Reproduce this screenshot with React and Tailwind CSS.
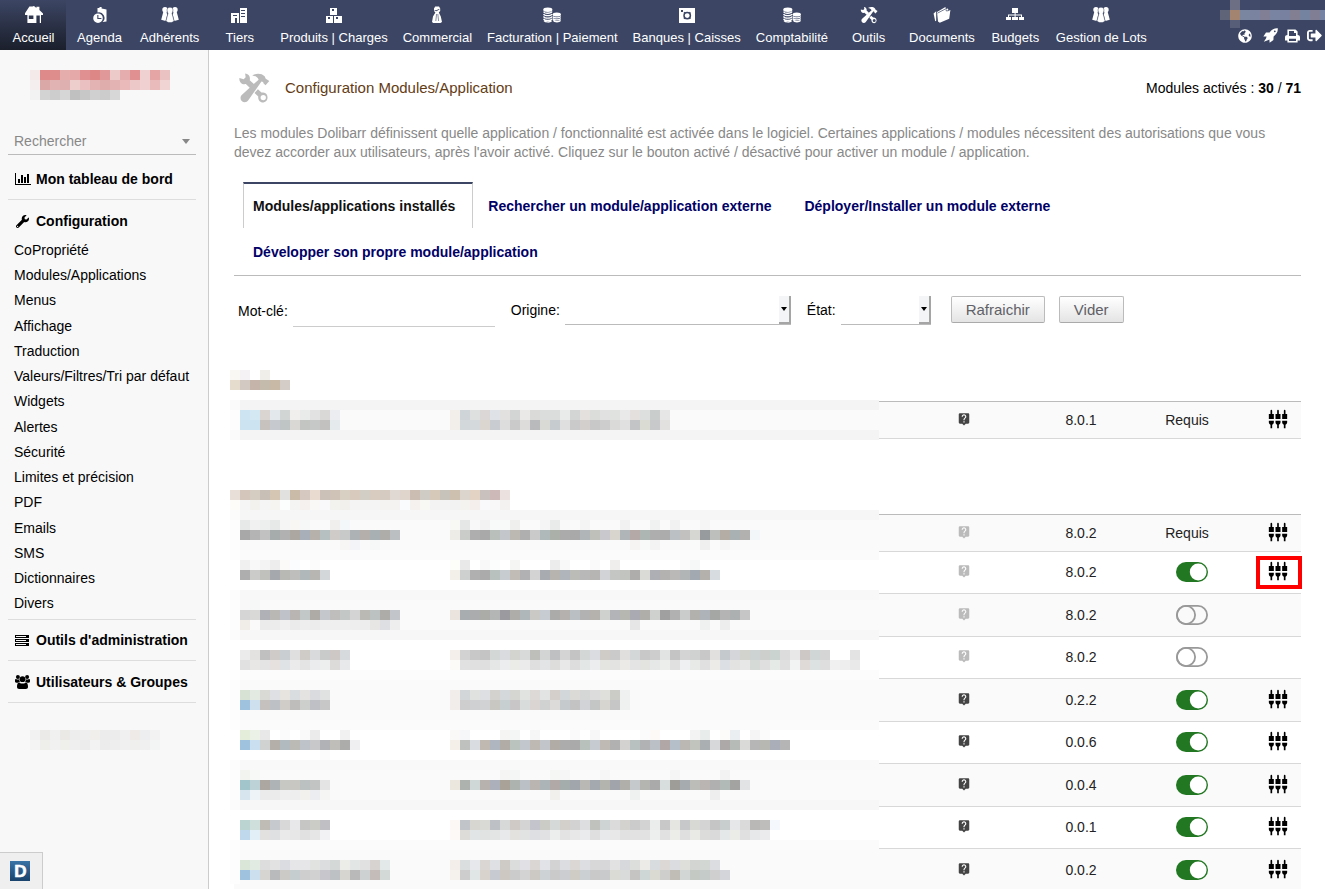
import React from "react";
import { FaGlobeAmericas, FaSignOutAlt, FaWrench } from "react-icons/fa";
import { MdLiveHelp, MdSettingsInputComponent } from "react-icons/md";

/* ---------- censored areas: grids of 10px cells ---------- */

// A token is "." (nothing), two hex digits (a grey) or six hex digits.
function toColor(token) {
  return token.length === 2 ? `#${token}${token}${token}` : `#${token}`;
}

function Mosaic({ width, height, bands = [], patches, className }) {
  return (
    <svg
      aria-hidden="true"
      width={width}
      height={height}
      viewBox={`0 0 ${width} ${height}`}
      shapeRendering="crispEdges"
      className={className}
    >
      {bands.map(([y, h, color]) => (
        <g key={y}>
          <rect x="0" y={y} width={width} height={h} fill={toColor(color)} />
          <rect x="0" y={y} width="10" height={h} fill="#fff" fillOpacity="0.5" />
        </g>
      ))}
      {patches.map(([x, y, cells]) =>
        cells.split(" ").map((token, i) =>
          token === "." ? null : (
            <rect key={`${x}-${y}-${i}`} x={x + i * 10} y={y} width="10" height="10" fill={toColor(token)} />
          )
        )
      )}
    </svg>
  );
}

const logoPatches = [
  [0, 0, "f4eaea de8a8a df8c8c e6adad e5a9a9 e09090 dd8787 e09898 eccaca e5adad e09090 f0d1d1 e5a5a5 ebc2c2"],
  [0, 10, "f5eeee dba8a8 e2b3b3 deb0b0 eecdcd eac0c0 e3b3b3 e0adad e3b3b3 eababa ecc8c8 f0d0d0 eabbbb f0d3d3"],
  [0, 20, "f2 d3 cd d6 c0 c7 d0 cc d7"],
];

const footerPatches = [
  [0, 0, "f2 eceae8 f0 eae9e6 ed ef f0efec ec ec f0 eeeae8 eceef0 f2"],
  [0, 10, "f4 eeeeea f1 efefec ef ec f2 ec ee f0 efefee f0 f3f5f5"],
];

const userPatches = [
  [10, 0, "6d7084 40496a 424b6a 3e4766 414a67 3f4866"],
  [0, 10, "5f6479 a28471 7a85a0 7a84a0 807f95 7884a2 7882a0 827f93 7484a0 807e94 7783a2"],
  [10, 20, "565e78"],
];

const coreBands = [
  [30, 10, "f4"],
  [40, 20, "fa"],
  [60, 10, "f4"],
];

const corePatches = [
  [0, 0, "faf8f3 f4f2f4 . efeee9"],
  [0, 10, "e5dccd d2c9c3 c4b4a9 c4bbac c8b8a6 d4ccc7"],
  [10, 40, "cde4f2 d4e8f4 dbd5d1 e3e8ec d1d5d3 f0efed e8ebea e2e2e2 d9d8d7 ebedf0"],
  [10, 50, "cce4f2 cce4f2 c8c2bf c6cacf bfc4c5 d9d8d4 c3c5c2 c5c8c7 c3c1c0 e5eaec"],
  [220, 40, "f2eeea cfd4d8 dde0df dbd7d7 dfe2e6 e3e1e0 d2d5d4 ebe9e8 dadbd9 dadddb dadddb e8ebea d3d5d4 e3e0de dbdddb e0e1e0 dfe2de e9 e3e0de dddfde c9cdcc e6"],
  [220, 50, "f2eeea d3d8db d4dadc dcd6d1 c9ccd1 dd ca dedcda b9babc d9d9d6 c5cbce df ca d2cfcc c8 cd dadbd8 e0 c2c4c6 dadbd3 c8c9ca e2e1e0"],
];

const moduleBands = [
  [20, 10, "f6"],
  [30, 30, "fa"],
  [60, 10, "fb"],
  [70, 30, "ff"],
  [100, 10, "f8"],
  [110, 30, "fa"],
  [140, 10, "f7"],
  [150, 30, "ff"],
  [180, 10, "fc"],
  [190, 40, "fa"],
  [230, 10, "fb"],
  [240, 30, "ff"],
  [270, 10, "f9"],
  [280, 30, "fa"],
  [310, 10, "f7"],
  [320, 30, "ff"],
  [350, 10, "fb"],
  [360, 34, "fa"],
];

const modulePatches = [
  [0, 0, "e7dfd8 d4c6bb d6cdc2 c8c0b6 d5c5b3 e1e2e0 c9bba8 d4c8c1 e9dbcf cbc1b9 cfc3b8 d9d0c4 d8cabc d2cdc5 d8cbbf d5cbc0 e0d8d2 e0d5cc ccbdb2 cfcbc5 d7c9b9 c7c3bb cec0ae dcd5ce e2d3c5 c9c1bd ccb9b8 ebe2df"],
  [0, 10, "fdfcf9 f5 f3f1ee f5 f5f4f1 fcfdfd f4f4f3 f4f1ee f9f8f6 f9f9fb f2f2ee f2f0ed f4 f4 f4 f4f3f1 f4f3f1 fafbfc f4f1ee f8f8f5 f3 f3 f2 f4f3f0 f4efec f9f9fb f8 f3f2f1"],
  [10, 30, "e7e8e8 f1 edeeee e7e9e8 f5 f8f7f4 f5f8f7 . . f1efed f4f7fa"],
  [10, 40, "a8 b4 c1 a6acab b0b1b0 aca7a1 a9afb8 b6b1ab b6c0c1 cfcbc8 c8caca adb3b4 b4afab a9b0b4 afadaa bbbfc2"],
  [110, 50, "f8f6f4 f2f4f7 . f6f8f7"],
  [220, 30, "f8f8f5 e5e6e6 f8 f2 f8faf9 f8faf9 eff0ee . . f5 e8ebea f9 . f4 . . . f1 . . eff2f0 . f1 . . f5"],
  [220, 40, "edece7 caccca ae a9 b9c0bc c3c7cb bcb9b2 aeafae ca b0b9ba abb0a9 ab a9 b0b6b8 c0c0ba c9c9cd d8d5cf b0b5b8 b5a9a8 aeb6b4 afaeaf ac bbc0c4 c2c1bf d6d7d3 989b9e bdbfbd b3ada6 a9b1b2 b2b1af f3f6f9"],
  [400, 50, "f5f4f3 f8faf9 f3 . . . . ef . f5"],
  [10, 70, "f0 f8 f4 ed fbfaf8 fbfcfd . fb"],
  [10, 80, "ae cbccca c0c0bd a5a9ad b8b8b5 bebfbc b0b8b9 b7b6b3 d3d7da"],
  [220, 70, "fdfdfa e9 . f8 fbfdfc . f5f6f4 . . . ec f8 . . fa . efeeec . . . . . . fa f5f8f6"],
  [220, 80, "f2f0e9 cdd0cf b0 ab b8c1bd c7ccd0 c1bdb6 b1b0b2 d3 a8abb0 b7b4af b0b5bb bbbbb8 b8 b7b5b3 d2d3d6 c4c6c3 c2c4c0 afadab dadbd6 adafb5 b4b2b1 bab9b7 b2b5b5 a3a9b0 b4b1ac d7dce1"],
  [10, 110, "f8 f6f8f7"],
  [10, 120, "d5 d9d9d7 b0b1b6 b9b8b4 bfc2c8 b9b5b3 c2c8c8 aeaba6 c4c7cc c0bebc c3c7c6 d4 bab9b4 bcc1c1 aeaca9 c2c6ca"],
  [10, 130, "f0ede8 . eb ec f0 eb ee ec ef ef ef ee ed e8e6e4 dedfe2 ee"],
  [220, 120, "ebe4de a8adb0 aaacad ababa8 b3b6b4 9b9b9f aeada9 b0b7bb cbc9c5 c7ccd2 abaca9 b4b1ae b9bfc2 b2 b5b1ac cfd1ce b2b4b7 b7b7b2 aaabb2 b0aea9 ced1ce a0 b1 c9ccca b2b1ae adb3b9 a5a7a4 b4 acb0b1 c6"],
  [400, 130, "e6 . . . . . . eef1ef . ed"],
  [10, 160, "ebebec e3e2e1 c0 cfcbc8 c9ced2 dfdfe0 cfcbc7 d9dadc c9cbca cdc7c5 d6dadc"],
  [10, 170, "e1 e8e7e6 e3e4e3 e6e1df dfe3e6 eb e4 ebecee edefee dcdbd9 e8e9ea"],
  [220, 160, "f4efea d1d2d1 c8 c4 d3d8d7 d9dbdf d3d3cf d8d9d9 bebfba d3d5d5 bfc0c1 d4 c4 d3d7d6 dadce2 cfcbc6 ca e0dfdd d3d7d8 c8 cd e1e4e2 c4 d4 d0d1d1 c8 e1e0de c3c9cd d5d6d9 d3d3ce cdd2d2 cdcfcd cbd3d0 dc e8 cdc8c5 d0d5d5 d5 . . e3"],
  [220, 170, "fdfbf8 e1 e0 df e5e7e6 ebedef ebebe8 eb df e3e4e6 dddedb e8 dd e3e7e5 ebedef e4e4e1 e3e3e1 ebeae6 e4 e3e3df e6e8e7 eceeec e0 eff0f2 e7eae7 e0 edebe8 dce0e4 e3e4e1 e7 d6dad6 df e6eae7 df f2f4f3 dfdad8 dce2e1 de f0 ee e9"],
  [10, 200, "d8e2d4 e3eae2 d9d9d6 dfe0e4 e7e3df d9dde0 e4e3e1 d9dbde e0e2e1"],
  [10, 210, "9fc3df cedfee c5c1bf bdc1c5 d0ccc7 bfbdbb cccfcc bfc0c6 c8c7c8"],
  [220, 200, "f1edea d2d6d9 dfe2df dddfe3 d3d2ce d5d8da d5d5d2 e0e3e0 dcd9d6 e1e4e2 d4cfcb d2d7d9 dcdad6 d4d7d5 dc dfdfdc ccccc7 eff1f1"],
  [220, 210, "f1edea ce ced0d2 d0d2d4 c8c7c2 c7cfd1 c8c6c7 d8dddb dad5d2 d0d2d1 dcdbd9 c5cbcd c3 d2d3d7 c3c6c5 d7d5d0 c6 eff1f1"],
  [10, 240, "e4ecda ebf1e7 e8 . fb . f9 eb . . f1"],
  [10, 250, "9fc3df cadff0 d0d2d1 b4afa9 b1bbbf bbbab4 bec3ca c8c8ca b0b2b5 c0beb8 acadab efeff1"],
  [220, 240, "fbf9f7 f5f7f9 . . . f5f6f4 f4f6f5 . f6 . . . fa . f7 . . . . fb fdf9f7 . . . f3 e8ecea . fdfbf9 eaeef0 . f5 fb"],
  [220, 250, "f5efea bfc1bf d9dde2 bfb9b1 b0b6c0 b2aca6 bbc3be c1c7cd bebab3 c2c6cb b1aca5 ac aa b8c1bb c6cbd1 bfbab3 b1 d3d2d0 b9c0c0 b0b2b4 bac0c5 b1a7a6 b5bfca bbb8b4 c1c4bd aab0b2 d7d8d9 ada9a9 b6bbb8 dadad8 b6 b8b8b2 aaaeb8 b6b5b6"],
  [10, 260, ". . . . . . . . fb"],
  [10, 280, "f2f4f0 f7f9f6"],
  [10, 290, "a2c5cc bdd2d6 ada7a2 aeb3b6 c7c8c3 c8c7c1 bbc0c0 c1c4c3 e4"],
  [10, 300, "d7e6ee eef3f7 eb eb ef ee f2f1ed ecedf0 f5f5f3"],
  [220, 280, ". . . . . f5f6f3 f3f6f4 . . . f5f7f5 f6 . . . f6 . . . . . . f5 . . . . f2"],
  [220, 290, "ebe7df adb2af d0d7d7 b7b2ae abb0bb a9a299 adb4af bac0c5 bab5b0 acb4b8 b0a9a7 a5adac a1a5ac bab8b4 a4a9af b3b4ae a1a4aa b0afa9 c6c9cb b4b4b1 a9aaa9 d8dedd 9f9d97 a6abb0 bcbcb8 bab5b2 b0 b2bab7 a3a3a1 e2e3e5"],
  [320, 300, "f2f0ed . . . . . . . eff1f0 . . . . . . . ee"],
  [10, 330, "bbd4d1 cfdfdc bfbcb6 c6cace d8d8d9 e8e8ea c6c6c5 ccccc7 c0bfc4"],
  [10, 340, "bfd8ec e2eff6 e2e1e0 dfe0e2 ea e7 e1 e6 f2f2f5"],
  [220, 330, "fcf8f5 c1c5c9 d7d6d1 d9dad6 bdc1c6 d7d9d8 cfcac5 d4d4d4 c4c5cc cbccc6 d5d9d8 d3cfca d2 dddee0 bfc2bd ced3d3 db d4d2cf cb d3 ebedec c8 e5e5e2 c7c8ca d8d9d4 d4 c5 c8cecd e5e7e9 da b9b8b7 bebdbc f5f9fd"],
  [220, 340, "fcf9f7 dedcd8 e1e5e5 e1e3e3 e2e5e4 e8e9ea e4e2df e0e3e1 dddfe2 e1e1e4 eceeed e3 e8 e9ebed df e8e9eb e8 e1 e2 e2 edefee e1 ecece8 df e9e9e5 dcdcda da e4e8e9 ebebe8 e0 e7e8ea ebebed"],
  [10, 370, "dae6d7 e1ebe2 dd e2 dbdce1 e6e6e9 e6e6e9 e0e3e0 dcdddf d4d8d6 ecece8 e2e7e6 e1 d6d3d1 e3e8e8"],
  [10, 380, "9fc3df cbdfee d6d5d1 b9babc cbcac7 c5cdcf ce d1 c6c6cc bdc1c3 d7d5cf b9 cdd1d1 c3bcb9 d2d9d7"],
  [220, 370, "f3eeea dbdedf e6e8eb dad6d3 dee0e4 cecac5 dadddb e1e1e5 d9d6d3 e1e3e8 d3 dbdde1 dad7d4 dcdee1 d8 d7d7d9 e2 d6d8dc dcdedc ecebe8 d9dcdf dcd8d6 dadce0 dedfdb d3d5d2 d3d7d4 dbdde0"],
  [220, 380, "f5f2ee cd e0e6e6 d8d3cd c8cad1 cdc9c2 cbcbcb d3 ccc9c4 cdd3d5 cacaca cccdd0 cfccc6 cbd1d2 c9 c8cacb dadbd5 d8dbda c6c4c2 cfd6d6 dbdad2 cecfcd c0bcb6 d2d6d4 c5c9c4 c5cbc8 cf d3d5da"],
];

/* ---------- icons ---------- */

function Glyph({ children, size = 18 }) {
  return (
    <svg aria-hidden="true" width={size} height={size} viewBox="0 0 18 18" fill="currentColor">
      {children}
    </svg>
  );
}

const HomeIcon = () => (
  <Glyph>
    <path fillRule="evenodd" d="M4.4 0.6 H7.4 L9 0 L11.4 2 V0.8 H14.4 V4 L18 7.6 V9 H16 V17 H14.8 V9.6 H11.4 V17 H2.4 V9 H0 V7.2 Z M3.8 9.4 V13 H8.4 V9.4 Z" />
  </Glyph>
);

const AgendaIcon = () => (
  <Glyph>
    <path d="M6.5 3.2 V2 H8 L9 1 H10.6 V2.4 L15.5 3.4 V15.5 L11.6 16 A5.6 5.6 0 0 0 6.5 6.4 Z" />
    <path fillRule="evenodd" d="M7 7.4 A4.8 4.8 0 1 1 7 17 A4.8 4.8 0 0 1 7 7.4 Z M6.3 9 V13 H10.4 V11.9 H7.4 V9 Z" />
  </Glyph>
);

const PeopleIcon = () => (
  <Glyph>
    <circle cx="4" cy="3.8" r="2.7" />
    <circle cx="14" cy="3.8" r="2.7" />
    <path d="M2.4 5.6 H5.4 L6.2 9 L4.6 15 L0.2 13.8 Z M15.6 5.6 H12.6 L11.8 9 L13.4 15 L17.8 13.8 Z" />
    <path d="M9 1.2 C11 1.2 12.2 2.8 11.9 4.8 C11.8 6 11.4 6.6 11 7.2 L13 14.8 C12.4 16 11 16.6 9 16.6 C7 16.6 5.6 16 5 14.8 L7 7.2 C6.6 6.6 6.2 6 6.1 4.8 C5.8 2.8 7 1.2 9 1.2 Z" stroke="#3c4664" strokeWidth="0.5" />
  </Glyph>
);

const BuildingIcon = () => (
  <Glyph>
    <path fillRule="evenodd" d="M9 2 H16 V17 H9 Z M10 4 V5 H14 V4 Z M10 7 V8 H14 V7 Z M10 10 V11 H14 V10 Z" />
    <path fillRule="evenodd" d="M0 7 H8 V17 H6 V12 H4 V17 H0 Z M2 9 V10 H6 V9 Z" />
  </Glyph>
);

const BoxesIcon = () => (
  <Glyph>
    <path fillRule="evenodd" d="M5 2 H12 V9 H5 Z M7 3 V5 H9 V3 Z" />
    <path fillRule="evenodd" d="M1 10 H8 V17 H1 Z M3 11 V13 H5 V11 Z" />
    <path fillRule="evenodd" d="M9 10 H17 V17 H9 Z M11 11 V13 H13 V11 Z" />
  </Glyph>
);

const TieIcon = () => (
  <Glyph>
    <path fillRule="evenodd" d="M7.2 0.4 H11 L12.2 2.4 V5 L10.8 6.6 L12.8 10.6 L14 16 L12.4 17 H5.2 L4 16 L5 10.6 L7.4 6.6 L6 5 V2.4 Z M6.4 4.6 L8.4 5.2 L11.4 3.4 L11.4 2.8 L8.4 4.2 L6.4 4 Z" />
    <path d="M8.6 8 L7.8 15 M9.8 8 L10.6 15" fill="none" stroke="#3c4664" strokeWidth="0.6" />
  </Glyph>
);

const CoinsIcon = () => (
  <Glyph>
    <ellipse cx="4.8" cy="3.8" rx="4.6" ry="2.2" />
    <ellipse cx="13.8" cy="8.6" rx="4.2" ry="2" />
    <g fill="none" stroke="currentColor" strokeWidth="1.3">
      <path d="M0.6 5.6 C1.4 7.8 8 7.8 9 5.6 M0.6 8 C1.4 10.2 8 10.2 9 8 M0.6 10.4 C1.4 12.6 8 12.6 9 10.4 M0.6 12.8 C1.4 15 8 15 9 12.8 M1 14.6 C2.4 16.4 7 16.4 8.6 14.8" />
      <path d="M9.8 10.4 C10.6 12.4 17 12.4 17.8 10.4 M9.8 12.4 C10.6 14.4 17 14.4 17.8 12.4 M10.2 14.4 C11.6 16.2 16.4 16.2 17.6 14.4" />
    </g>
  </Glyph>
);

const SafeIcon = () => (
  <Glyph>
    <path d="M1 2 H17 V17 H1 Z" />
    <path fill="#3c4664" d="M3 4 H5 V6 H3 Z" />
    <circle cx="9.2" cy="9.6" r="3.2" fill="none" stroke="#3c4664" strokeWidth="1.5" />
    <path fill="none" stroke="#3c4664" strokeWidth="1.6" d="M6 6.4 L7.2 7.6 M12.4 6.4 L11.2 7.6 M6 12.8 L7.2 11.6 M12.4 12.8 L11.2 11.6" />
  </Glyph>
);

const ToolsIcon = ({ size }) => (
  <Glyph size={size}>
    <path
      fillRule="evenodd"
      d="M4 0.9 L4.3 3 L3.2 4.1 L0.8 3.4 C0.5 5.6 2.2 7.3 4.4 6.8 L6.9 9.1 L9.1 6.9 L6.6 4.6 C7.1 2.6 5.8 1 4 0.9 Z M11.2 9.7 L9.3 11.8 L11.4 13.8 C11.1 15.7 12.5 17.2 14.3 17.2 A2.9 2.9 0 0 0 14.2 11.5 L13.2 11.6 Z M14.2 12.9 A1.5 1.5 0 1 1 14.2 15.9 A1.5 1.5 0 0 1 14.2 12.9 Z"
    />
    <path d="M8 1.9 C10.4 0.6 13.2 0.7 15 2.4 L15.6 3.8 L16.3 4.2 L17.6 5.1 L15.5 7.4 L14.4 6.5 L14.1 5.6 L13.2 5.4 L5.8 15.9 C5 17.2 3.1 17.3 2.1 16.3 C1.1 15.3 1.2 13.5 2.4 12.6 L11.6 4.3 C11.1 2.9 9.8 2.2 8 1.9 Z" />
  </Glyph>
);

const FolderIcon = () => (
  <Glyph>
    <path d="M0.6 7.6 L3.2 5.2 V14.8 L2.2 15.2 Z" />
    <path d="M4 6 L12.4 1 L13 3 L15 2.4 L15.4 4.6 L17.4 4 L16.2 12.8 L6.8 16.8 L5 15.6 Z" />
    <path d="M4.4 7.2 L12 3.2 M12.6 2.4 L13.4 5 L16.4 4.4" fill="none" stroke="#3c4664" strokeWidth="0.7" />
  </Glyph>
);

const SitemapIcon = () => (
  <Glyph>
    <path d="M6 2 H12 V7 H9.6 V8.6 H16 V11 H18 V14 H13 V11 H15 V9.6 H9.6 V11 H12 V14 H6 V11 H8.6 V9.6 H3 V11 H5 V14 H0 V11 H2 V8.6 H8.6 V7 H6 Z" />
  </Glyph>
);

const RocketIcon = () => (
  <svg aria-hidden="true" width="15" height="15" viewBox="0 0 15 15" fill="currentColor">
    <path
      fillRule="evenodd"
      d="M14.8 0.3 C11.4 0 8.8 1.4 6.6 4.4 L3 4.6 L0.4 8.4 L3.6 8.6 L3 10.4 L0.8 13.8 L4.8 12.2 L6.4 11.6 L6.6 14.8 L10.4 12 L10.6 8.4 C13.6 6.2 15 3.6 14.8 0.3 Z M11.8 2.4 A0.9 0.9 0 1 1 11.8 4.2 A0.9 0.9 0 0 1 11.8 2.4 Z"
    />
  </svg>
);

const PrintIcon = () => (
  <svg aria-hidden="true" width="15" height="14" viewBox="0 0 15 14" fill="currentColor">
    <path fillRule="evenodd" d="M2.4 0.5 H10.5 L12.6 2.6 V6 C13.9 6 15 6.8 15 8.2 V11.6 H12.6 V13.5 H2.4 V11.6 H0 V8.2 C0 6.8 1.1 6 2.4 6 Z M4 2 V7 H11 V4 H9 V2 Z M4 9.8 V12 H11 V9.8 Z" />
  </svg>
);

const ChartIcon = () => (
  <svg aria-hidden="true" width="16" height="12" viewBox="0 0 16 12" shapeRendering="crispEdges">
    <path d="M0 0 H1 V11 H16 V12 H0 Z M3 6 H5 V10 H3 Z M6 2 H8 V10 H6 Z M9 4 H11 V10 H9 Z M12 1 H14 V10 H12 Z" />
  </svg>
);

const ServerIcon = () => (
  <svg aria-hidden="true" width="14" height="11" viewBox="0 0 14 11" shapeRendering="crispEdges">
    <path
      fillRule="evenodd"
      d="M0 0 H14 V3 H0 Z M1 1 V2 H11 V1 Z M0 4 H14 V7 H0 Z M1 5 V6 H11 V5 Z M0 8 H14 V11 H0 Z M1 9 V10 H11 V9 Z"
    />
  </svg>
);

const GroupIcon = () => (
  <svg aria-hidden="true" width="15" height="14" viewBox="0 0 15 14">
    <circle cx="2.9" cy="2" r="2" />
    <circle cx="12.1" cy="2" r="2" />
    <path d="M0 5 C0 4 0.8 3.6 1.4 4.2 C2.4 4.8 3.4 4.6 4.2 4.2 C4.2 5.4 4.4 6.2 5 7 C4 7 3.4 7.2 2.8 7.8 H1.4 C0.6 7.8 0 7.4 0 6.6 Z M15 5 C15 4 14.2 3.6 13.6 4.2 C12.6 4.8 11.6 4.6 10.8 4.2 C10.8 5.4 10.6 6.2 10 7 C11 7 11.6 7.2 12.2 7.8 H13.6 C14.4 7.8 15 7.4 15 6.6 Z" />
    <circle cx="7.5" cy="4.2" r="2.9" />
    <path d="M4.2 7.4 C6.4 9 8.6 9 10.8 7.4 C12.4 7.4 13 9.4 13 11.8 C13 13.2 12.2 14 10.8 14 H4.2 C2.8 14 2 13.2 2 11.8 C2 9.4 2.6 7.4 4.2 7.4 Z" />
  </svg>
);

/* ---------- top bar ---------- */

const topMenu = [
  ["Accueil", HomeIcon],
  ["Agenda", AgendaIcon],
  ["Adhérents", PeopleIcon],
  ["Tiers", BuildingIcon],
  ["Produits | Charges", BoxesIcon],
  ["Commercial", TieIcon],
  ["Facturation | Paiement", CoinsIcon],
  ["Banques | Caisses", SafeIcon],
  ["Comptabilité", CoinsIcon],
  ["Outils", ToolsIcon],
  ["Documents", FolderIcon],
  ["Budgets", SitemapIcon],
  ["Gestion de Lots", PeopleIcon],
];

function TopBar() {
  return (
    <header className="flex h-[50px] shrink-0 justify-between bg-[#3c4664] text-white">
      <nav className="flex text-[13px] leading-4">
        {topMenu.map(([label, Icon], i) => (
          <a
            key={label}
            href="#"
            className={`flex min-w-[66px] shrink-0 flex-col items-center gap-1.5 whitespace-nowrap pl-2 pr-[7px] pt-1.5 ${
              i === 0 ? "bg-linear-to-b from-[#3c4664] to-[#1b1f2c]" : ""
            }`}
          >
            <Icon />
            {label}
          </a>
        ))}
      </nav>
      <div className="flex flex-col items-end">
        <Mosaic width={105} height={28} patches={userPatches} />
        <div className="flex items-center gap-[7px] pr-[3px]">
          <a href="#" aria-label="Langue" className="pr-1"><FaGlobeAmericas size={14} /></a>
          <a href="#" aria-label="Raccourcis"><RocketIcon /></a>
          <a href="#" aria-label="Imprimer"><PrintIcon /></a>
          <a href="#" aria-label="Déconnexion"><FaSignOutAlt size={15} /></a>
        </div>
      </div>
    </header>
  );
}

/* ---------- side bar ---------- */

const configItems = [
  "CoPropriété", "Modules/Applications", "Menus", "Affichage", "Traduction",
  "Valeurs/Filtres/Tri par défaut", "Widgets", "Alertes", "Sécurité",
  "Limites et précision", "PDF", "Emails", "SMS", "Dictionnaires", "Divers",
];

function SideTitle({ icon, children }) {
  return (
    <a href="#" className="flex h-5 items-center whitespace-nowrap font-bold">
      <span className="flex w-[22px] items-center pl-px">{icon}</span>
      {children}
    </a>
  );
}

function SideBar() {
  return (
    <aside className="flex w-[209px] shrink-0 flex-col border-r border-[#ccc] bg-[#f8f8f8] pl-2 pr-3 text-[14px] text-black">
      <Mosaic width={140} height={30} patches={logoPatches} className="ml-[22px] mt-5" />
      <button
        type="button"
        className="mt-7 flex h-[27px] shrink-0 items-center justify-between border-b border-[#bbb] px-1.5 text-[#888]"
      >
        Rechercher
        <svg aria-hidden="true" width="8" height="5" viewBox="0 0 8 5" fill="#888"><path d="M0 0 H8 L4 5 Z" /></svg>
      </button>
      <div className="border-b border-[#ddd] px-1.5 pb-[10px] pt-[14px]">
        <SideTitle icon={<ChartIcon />}>Mon tableau de bord</SideTitle>
      </div>
      <div className="border-b border-[#ddd] px-1.5 pb-[3px] pt-[11px]">
        <SideTitle icon={<FaWrench size={13} className="ml-px" />}>Configuration</SideTitle>
        <ul className="pt-[7px] leading-[25px]">
          {configItems.map((label) => (
            <li key={label} className="whitespace-nowrap [&:nth-child(4n)]:pt-px"><a href="#">{label}</a></li>
          ))}
        </ul>
      </div>
      <div className="border-b border-[#ddd] px-1.5 py-[10px]">
        <SideTitle icon={<ServerIcon />}>Outils d'administration</SideTitle>
      </div>
      <div className="border-b border-[#ddd] px-1.5 pb-[10px] pt-[11px]">
        <SideTitle icon={<GroupIcon />}>Utilisateurs &amp; Groupes</SideTitle>
      </div>
      <Mosaic width={130} height={20} patches={footerPatches} className="ml-[22px] mt-[27px]" />
      <button
        type="button"
        aria-label="Dolibarr"
        className="-ml-2 mt-auto flex h-[37px] w-[43px] items-center justify-center border-r border-t border-[#ccc] bg-[#efefef] pr-[3px]"
      >
        <svg aria-hidden="true" width="20" height="20" viewBox="0 0 20 20">
          <defs>
            <linearGradient id="badge" x1="0" y1="0" x2="0" y2="1">
              <stop offset="0" stopColor="#3a73a6" />
              <stop offset="1" stopColor="#1a426c" />
            </linearGradient>
          </defs>
          <rect width="20" height="20" fill="url(#badge)" />
          <text x="10.5" y="16" textAnchor="middle" fontFamily="Liberation Sans, sans-serif" fontWeight="bold" fontSize="17" fill="#fff" stroke="#fff" strokeWidth="0.6">D</text>
        </svg>
      </button>
    </aside>
  );
}

/* ---------- main area ---------- */

const tabs = [
  "Modules/applications installés",
  "Rechercher un module/application externe",
  "Déployer/Installer un module externe",
  "Développer son propre module/application",
];

function DropDown({ id, label, width }) {
  return (
    <div className="flex items-center gap-[5px]">
      <label htmlFor={id}>{label}</label>
      <span className={`relative flex h-[29px] ${width}`}>
        <select id={id} className="w-full appearance-none border-b border-[#bbb] bg-transparent outline-none" />
        <span className="pointer-events-none absolute right-0 top-0 flex h-[28px] w-3 items-center justify-center border-b-2 border-r-2 border-[#a5a5a5] bg-[#f4f5f6]">
          <svg aria-hidden="true" width="6" height="4" viewBox="0 0 6 4"><path d="M0 0 H6 L3 4 Z" /></svg>
        </span>
      </span>
    </div>
  );
}

const pushButton =
  "h-[27px] rounded-[2px] border border-[#bbb] border-b-[#aaa] bg-linear-to-b from-white to-[#e4e4e4] px-3.5 text-[15px] leading-6 text-[#606066]";

function Filters() {
  return (
    <form className="mt-5 flex items-start text-[14px] text-black" onSubmit={(e) => e.preventDefault()}>
      <div className="flex h-[31px] items-center gap-[5px] pl-1">
        <label htmlFor="keyword">Mot-clé:</label>
        <input id="keyword" type="text" className="h-[31px] w-[202px] border-b border-[#ccc] bg-transparent outline-none" />
      </div>
      <div className="ml-4"><DropDown id="origin" label="Origine:" width="w-[226px]" /></div>
      <div className="ml-4"><DropDown id="state" label="État:" width="w-[90px]" /></div>
      <button type="submit" className={`ml-5 ${pushButton}`}>Rafraichir</button>
      <button type="reset" className={`ml-3.5 ${pushButton}`}>Vider</button>
    </form>
  );
}

function Toggle({ on }) {
  return (
    <button type="button" role="switch" aria-checked={on} aria-label="Activer le module" className="ml-2.5 block">
      <svg aria-hidden="true" width="32" height="20" viewBox="0 0 32 20">
        {on ? (
          <>
            <rect width="32" height="20" rx="10" fill="#227722" />
            <circle cx="22.2" cy="10" r="8.4" fill="#fff" />
          </>
        ) : (
          <g fill="none" stroke="#999" strokeWidth="1.8">
            <rect x="0.9" y="0.9" width="30.2" height="18.2" rx="9.1" />
            <circle cx="10" cy="10" r="9.1" />
          </g>
        )}
      </svg>
    </button>
  );
}

function ModuleTable({ rows, edge }) {
  return (
    <table className={`w-full table-fixed border-collapse border-t border-[#bbb] text-[14px] text-[#222] ${edge}`}>
      <colgroup>
        <col className="w-[216px]" />
        <col />
        <col className="w-[158px]" />
        <col className="w-[76px]" />
        <col className="w-[136px]" />
        <col className="w-[46px]" />
      </colgroup>
      <tbody>
        {rows.map(({ version, state, faded, setup, marked }, i) => (
          <tr
            key={i}
            className={`border-b border-[#d8d8d8] ${i % 2 === 0 ? "bg-[#fafafa]" : "bg-white"} ${
              state === "required" ? "h-[37px]" : i % 2 === 0 ? "h-[43px]" : "h-[42px]"
            }`}
          >
            <td />
            <td />
            <td className="p-0 pb-[3px]">
              <MdLiveHelp size={14} className={`mx-auto ${faded ? "text-[#bbb]" : "text-[#444]"}`} />
            </td>
            <td className="p-0 text-center">{version}</td>
            <td className="p-0">
              {state === "required" ? (
                <span className="block text-center">Requis</span>
              ) : (
                <span className="flex justify-center pb-px"><Toggle on={state === "on"} /></span>
              )}
            </td>
            <td className="relative p-0 pb-[3px]">
              {setup && (
                <a href="#" aria-label="Configurer" className="flex justify-center text-black">
                  <MdSettingsInputComponent size={20} />
                </a>
              )}
              {marked && (
                <span className="pointer-events-none absolute -right-px left-px top-1 h-[33px] border-4 border-[#f00]" />
              )}
            </td>
          </tr>
        ))}
      </tbody>
    </table>
  );
}

const coreRows = [{ version: "8.0.1", state: "required", setup: true }];

const moduleRows = [
  { version: "8.0.2", state: "required", faded: true, setup: true },
  { version: "8.0.2", state: "on", faded: true, setup: true, marked: true },
  { version: "8.0.2", state: "off", faded: true },
  { version: "8.0.2", state: "off", faded: true },
  { version: "0.2.2", state: "on", setup: true },
  { version: "0.0.6", state: "on", setup: true },
  { version: "0.0.4", state: "on", setup: true },
  { version: "0.0.1", state: "on", setup: true },
  { version: "0.0.2", state: "on", setup: true },
];

export default function App() {
  return (
    <div className="flex h-screen flex-col overflow-hidden bg-white font-['Liberation_Sans',Arial,sans-serif]">
      <TopBar />
      <div className="flex min-h-0 grow">
        <SideBar />
        <main className="min-w-0 grow overflow-y-auto pl-[25px] pr-6 [scrollbar-width:none]">
          <div className="mt-[22px] flex items-center text-[15px] leading-8">
            <span className="ml-1 text-[#bbb]"><ToolsIcon size={32} /></span>
            <h1 className="ml-[15px] grow text-[#643c14]">Configuration Modules/Application</h1>
            <p className="text-[14px] text-black">Modules activés : <b>30</b> / <b>71</b></p>
          </div>
          <p className="mt-5 text-[14px] leading-[19px] text-[#888]">
            Les modules Dolibarr définissent quelle application / fonctionnalité est activée dans le logiciel. Certaines
            applications / modules nécessitent des autorisations que vous devez accorder aux utilisateurs, après l'avoir
            activé. Cliquez sur le bouton activé / désactivé pour activer un module / application.
          </p>
          <nav className="mt-5 flex flex-wrap gap-x-[5px] border-b border-[#bbb] pb-px pl-[9px] text-[14px] font-bold">
            {tabs.map((label, i) => (
              <a
                key={label}
                href="#"
                className={`flex h-[46px] items-center whitespace-nowrap border-x border-t-2 pl-[9px] pr-[17px] ${
                  i === 0 ? "border-x-[#ccc] border-t-[#3c4664] text-[#111]" : "border-transparent text-[#000066]"
                }`}
              >
                {label}
              </a>
            ))}
          </nav>
          <Filters />
          <section className="relative mt-[43px] pt-[31px]">
            <ModuleTable rows={coreRows} edge="border-b" />
            <Mosaic width={649} height={70} bands={coreBands} patches={corePatches} className="absolute -left-1 top-0" />
          </section>
          <section className="relative mt-[51px] pt-6">
            <ModuleTable rows={moduleRows} edge="" />
            <Mosaic width={649} height={394} bands={moduleBands} patches={modulePatches} className="absolute -left-1 top-0" />
          </section>
        </main>
      </div>
    </div>
  );
}
